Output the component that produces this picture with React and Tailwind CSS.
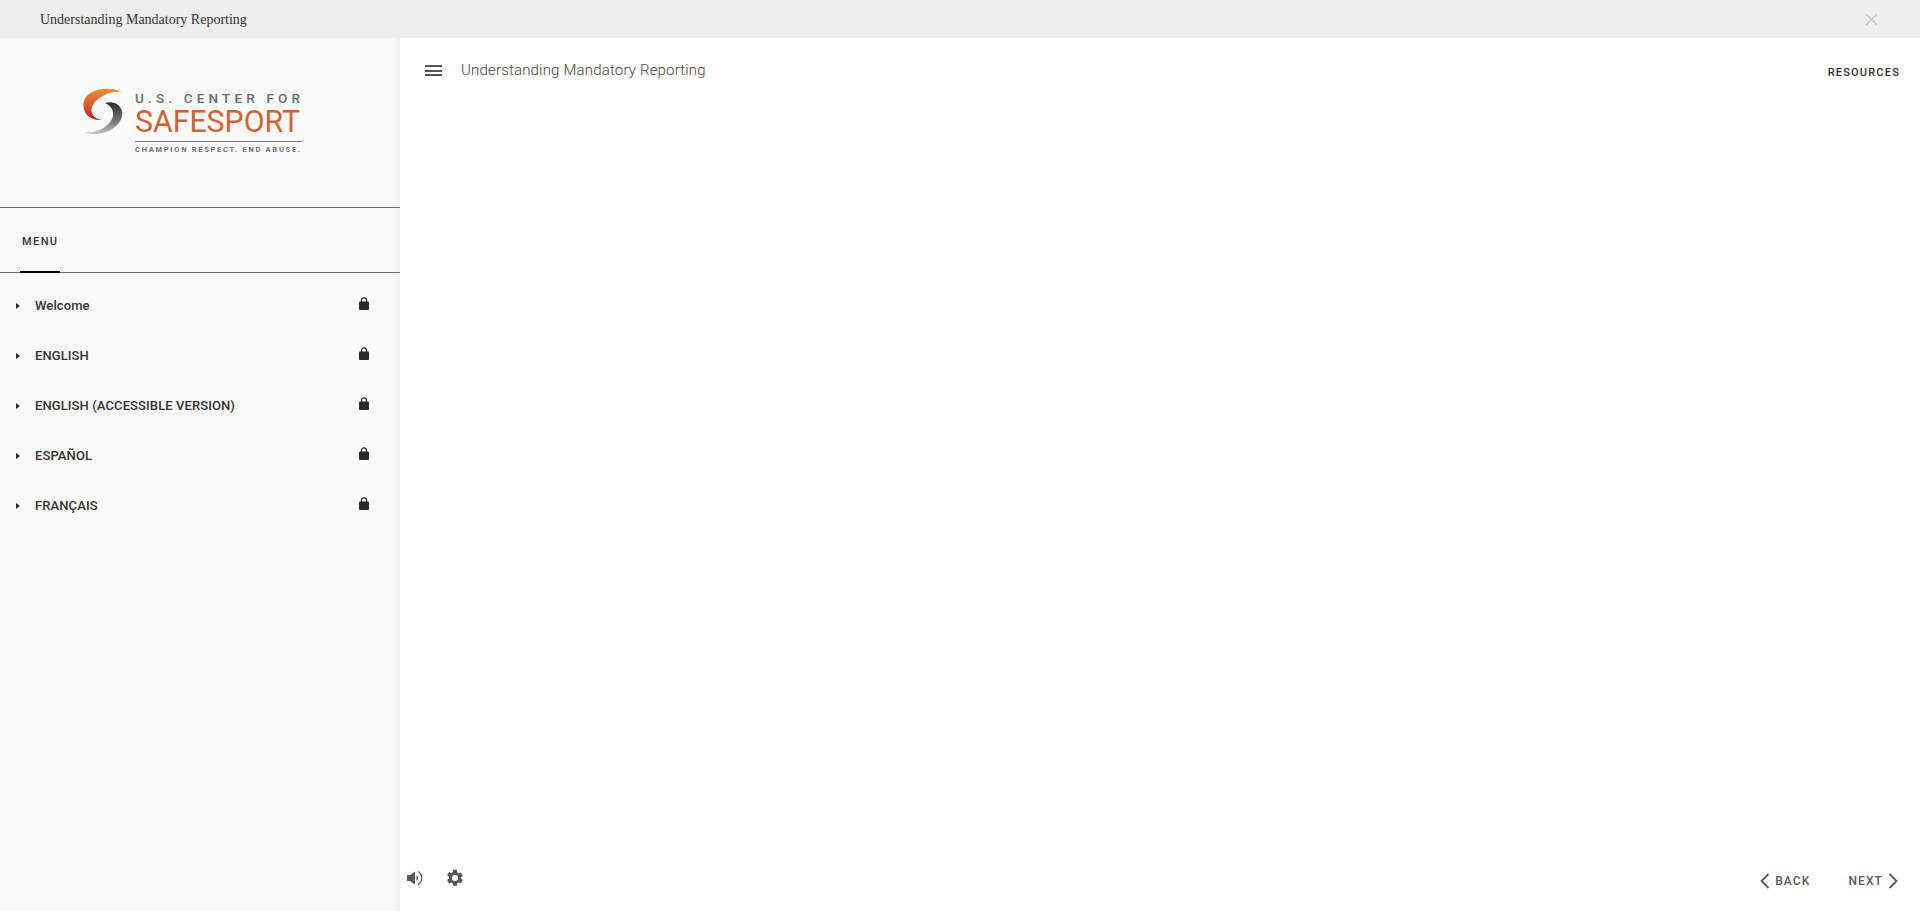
const din = "font-['Roboto','Liberation_Sans',sans-serif]";

const items = ["Welcome", "ENGLISH", "ENGLISH (ACCESSIBLE VERSION)", "ESPAÑOL", "FRANÇAIS"];

const Logo = () => (
  <svg width="240" height="70" viewBox="0 0 240 70">
    <defs>
      <linearGradient id="arcTop" x1="0" y1="0" x2="0" y2="1">
        <stop offset="0" stopColor="#e8933a" />
        <stop offset="0.55" stopColor="#d9552c" />
        <stop offset="1" stopColor="#a81f2c" />
      </linearGradient>
      <linearGradient id="arcBottom" x1="0" y1="0" x2="0" y2="1">
        <stop offset="0" stopColor="#2b2b2b" />
        <stop offset="0.6" stopColor="#77777a" />
        <stop offset="1" stopColor="#c4c4c4" />
      </linearGradient>
    </defs>
    <path d="M40 4C30 -1 12 -1 4 9C-2 17 2 33 20 32C12 31 8 25 10 19C13 10 28 2 40 4Z" fill="url(#arcTop)" />
    <path d="M23 15C33 12 42 19 40 28C37 42 17 50 3 44C15 46 29 38 31 28C32 22 28 17 23 15Z" fill="url(#arcBottom)" />
    <text x="53" y="15" textLength="165" lengthAdjust="spacing" fontFamily="Roboto, sans-serif" fontSize="13.5" fontWeight="500" fill="#676c70">U.S. CENTER FOR</text>
    <text x="53" y="44" textLength="165" lengthAdjust="spacingAndGlyphs" fontFamily="Roboto, sans-serif" fontSize="32" fill="#cf6337">SAFESPORT</text>
    <rect x="53" y="53" width="167" height="1" fill="#75797c" />
    <text x="53" y="64" textLength="165" lengthAdjust="spacing" fontFamily="Roboto, sans-serif" fontSize="7.5" fontWeight="700" fill="#6c7074">CHAMPION RESPECT. END ABUSE.</text>
  </svg>
);

const Lock = () => (
  <svg width="10" height="13" viewBox="0 0 10 13" className="mt-[-6px]">
    <path d="M2.5 5V3.4a2.5 2.5 0 0 1 5 0V5" fill="none" stroke="#2a2a2c" strokeWidth="1.3" />
    <rect x="0" y="4.5" width="10" height="8.5" rx="1" fill="#2a2a2c" />
  </svg>
);

const Row = ({ label }) => (
  <div className="flex h-[50px] items-center pl-4 pr-[31px]">
    <svg width="4" height="6" viewBox="0 0 4 6" className="mr-[15px] shrink-0">
      <path d="M0 0L4 3L0 6Z" fill="#2a2a2c" />
    </svg>
    <span className={`${din} flex-1 text-[13px] font-medium tracking-[0.1px] text-[#333134]`}>{label}</span>
    <Lock />
  </div>
);

const Chevron = ({ flip }) => (
  <svg width="10" height="16" viewBox="0 0 10 16" className={flip ? "rotate-180" : ""}>
    <path d="M8.5 1L1.5 8L8.5 15" fill="none" stroke="#58585a" strokeWidth="1.8" />
  </svg>
);

export default function App() {
  return (
    <div className="flex h-[911px] w-[1920px] flex-col overflow-hidden bg-white">
      <div className="flex h-[38px] shrink-0 items-center justify-between bg-[#eeeeee] pl-10 pr-[42px]">
        <span className="font-['Liberation_Serif',serif] text-[14px] text-[#333333]">Understanding Mandatory Reporting</span>
        <svg width="13" height="13" viewBox="0 0 13 13">
          <path d="M1 1L12 12M12 1L1 12" stroke="#c4c4c4" strokeWidth="1.2" />
        </svg>
      </div>
      <div className="flex flex-1">
        <aside className="flex w-[400px] shrink-0 flex-col bg-[#fafafa] shadow-[inset_-12px_0_10px_-10px_rgba(0,0,0,0.08)]">
          <div className="flex h-[170px] shrink-0 items-start border-b border-[#6e6e6e] pl-[82px] pt-[50px]">
            <Logo />
          </div>
          <div className="relative flex h-[65px] shrink-0 items-center border-b border-[#6e6e6e] pl-[22px]">
            <span className={`${din} mt-[4px] text-[11px] font-medium tracking-[1.4px] text-[#333134]`}>MENU</span>
            <div className="absolute bottom-[-1px] left-5 h-[2px] w-10 bg-black" />
          </div>
          <div className="pt-2">
            {items.map((i) => (
              <Row key={i} label={i} />
            ))}
          </div>
        </aside>
        <main className="flex flex-1 flex-col justify-between">
          <div className="flex h-[70px] items-start pl-[25px] pr-5">
            <div className="mt-[27px] flex w-[17px] flex-col gap-[2.5px]">
              <div className="h-[2px] bg-[#555555]" />
              <div className="h-[2px] bg-[#555555]" />
              <div className="h-[2px] bg-[#555555]" />
            </div>
            <span className={`${din} ml-[19px] mt-[21px] flex-1 text-[15px] font-light tracking-[0.18px] text-[#444444]`}>
              Understanding Mandatory Reporting
            </span>
            <span className={`${din} mt-[27px] text-[11px] font-medium tracking-[1.2px] text-[#333134]`}>RESOURCES</span>
          </div>
          <div className="flex h-[45px] items-start justify-between pl-[7px] pr-[22px]">
            <div className="mt-[2px] flex items-center gap-[22px]">
              <svg width="16" height="16" viewBox="0 0 16 16">
                <path d="M0 5H3L8 1.5V14.5L3 11H0Z" fill="#58585a" />
                <path d="M11 1.5A7.5 7.5 0 0 1 11 14.5" fill="none" stroke="#58585a" strokeWidth="1.2" />
                <path d="M9.5 5A3.5 3.5 0 0 1 9.5 11" fill="#58585a" />
              </svg>
              <svg width="20" height="20" viewBox="0 0 24 24">
                <path
                  fill="#58585a"
                  d="M19.14 12.94c.04-.3.06-.61.06-.94s-.02-.64-.07-.94l2.03-1.58a.49.49 0 0 0 .12-.61l-1.92-3.32a.49.49 0 0 0-.59-.22l-2.39.96a7 7 0 0 0-1.62-.94l-.36-2.54A.48.48 0 0 0 13.92 2h-3.84a.47.47 0 0 0-.47.41l-.36 2.54c-.59.24-1.13.57-1.62.94l-2.39-.96a.48.48 0 0 0-.59.22L2.74 8.47a.47.47 0 0 0 .12.61l2.03 1.58c-.05.3-.09.63-.09.94s.02.64.07.94l-2.03 1.58a.49.49 0 0 0-.12.61l1.92 3.32c.12.22.37.29.59.22l2.39-.96c.5.38 1.03.7 1.62.94l.36 2.54c.05.24.24.41.48.41h3.84c.24 0 .44-.17.47-.41l.36-2.54c.59-.24 1.13-.56 1.62-.94l2.39.96c.22.08.47 0 .59-.22l1.92-3.32a.47.47 0 0 0-.12-.61zM12 15.6A3.6 3.6 0 1 1 12 8.4a3.6 3.6 0 0 1 0 7.2z"
                />
              </svg>
            </div>
            <div className="mt-[6px] flex items-center">
              <Chevron />
              <span className={`${din} ml-[5px] text-[12px] font-medium tracking-[1.1px] text-[#58585a]`}>BACK</span>
              <span className={`${din} ml-[38px] mr-[5px] text-[12px] font-medium tracking-[1.1px] text-[#58585a]`}>NEXT</span>
              <Chevron flip />
            </div>
          </div>
        </main>
      </div>
    </div>
  );
}
